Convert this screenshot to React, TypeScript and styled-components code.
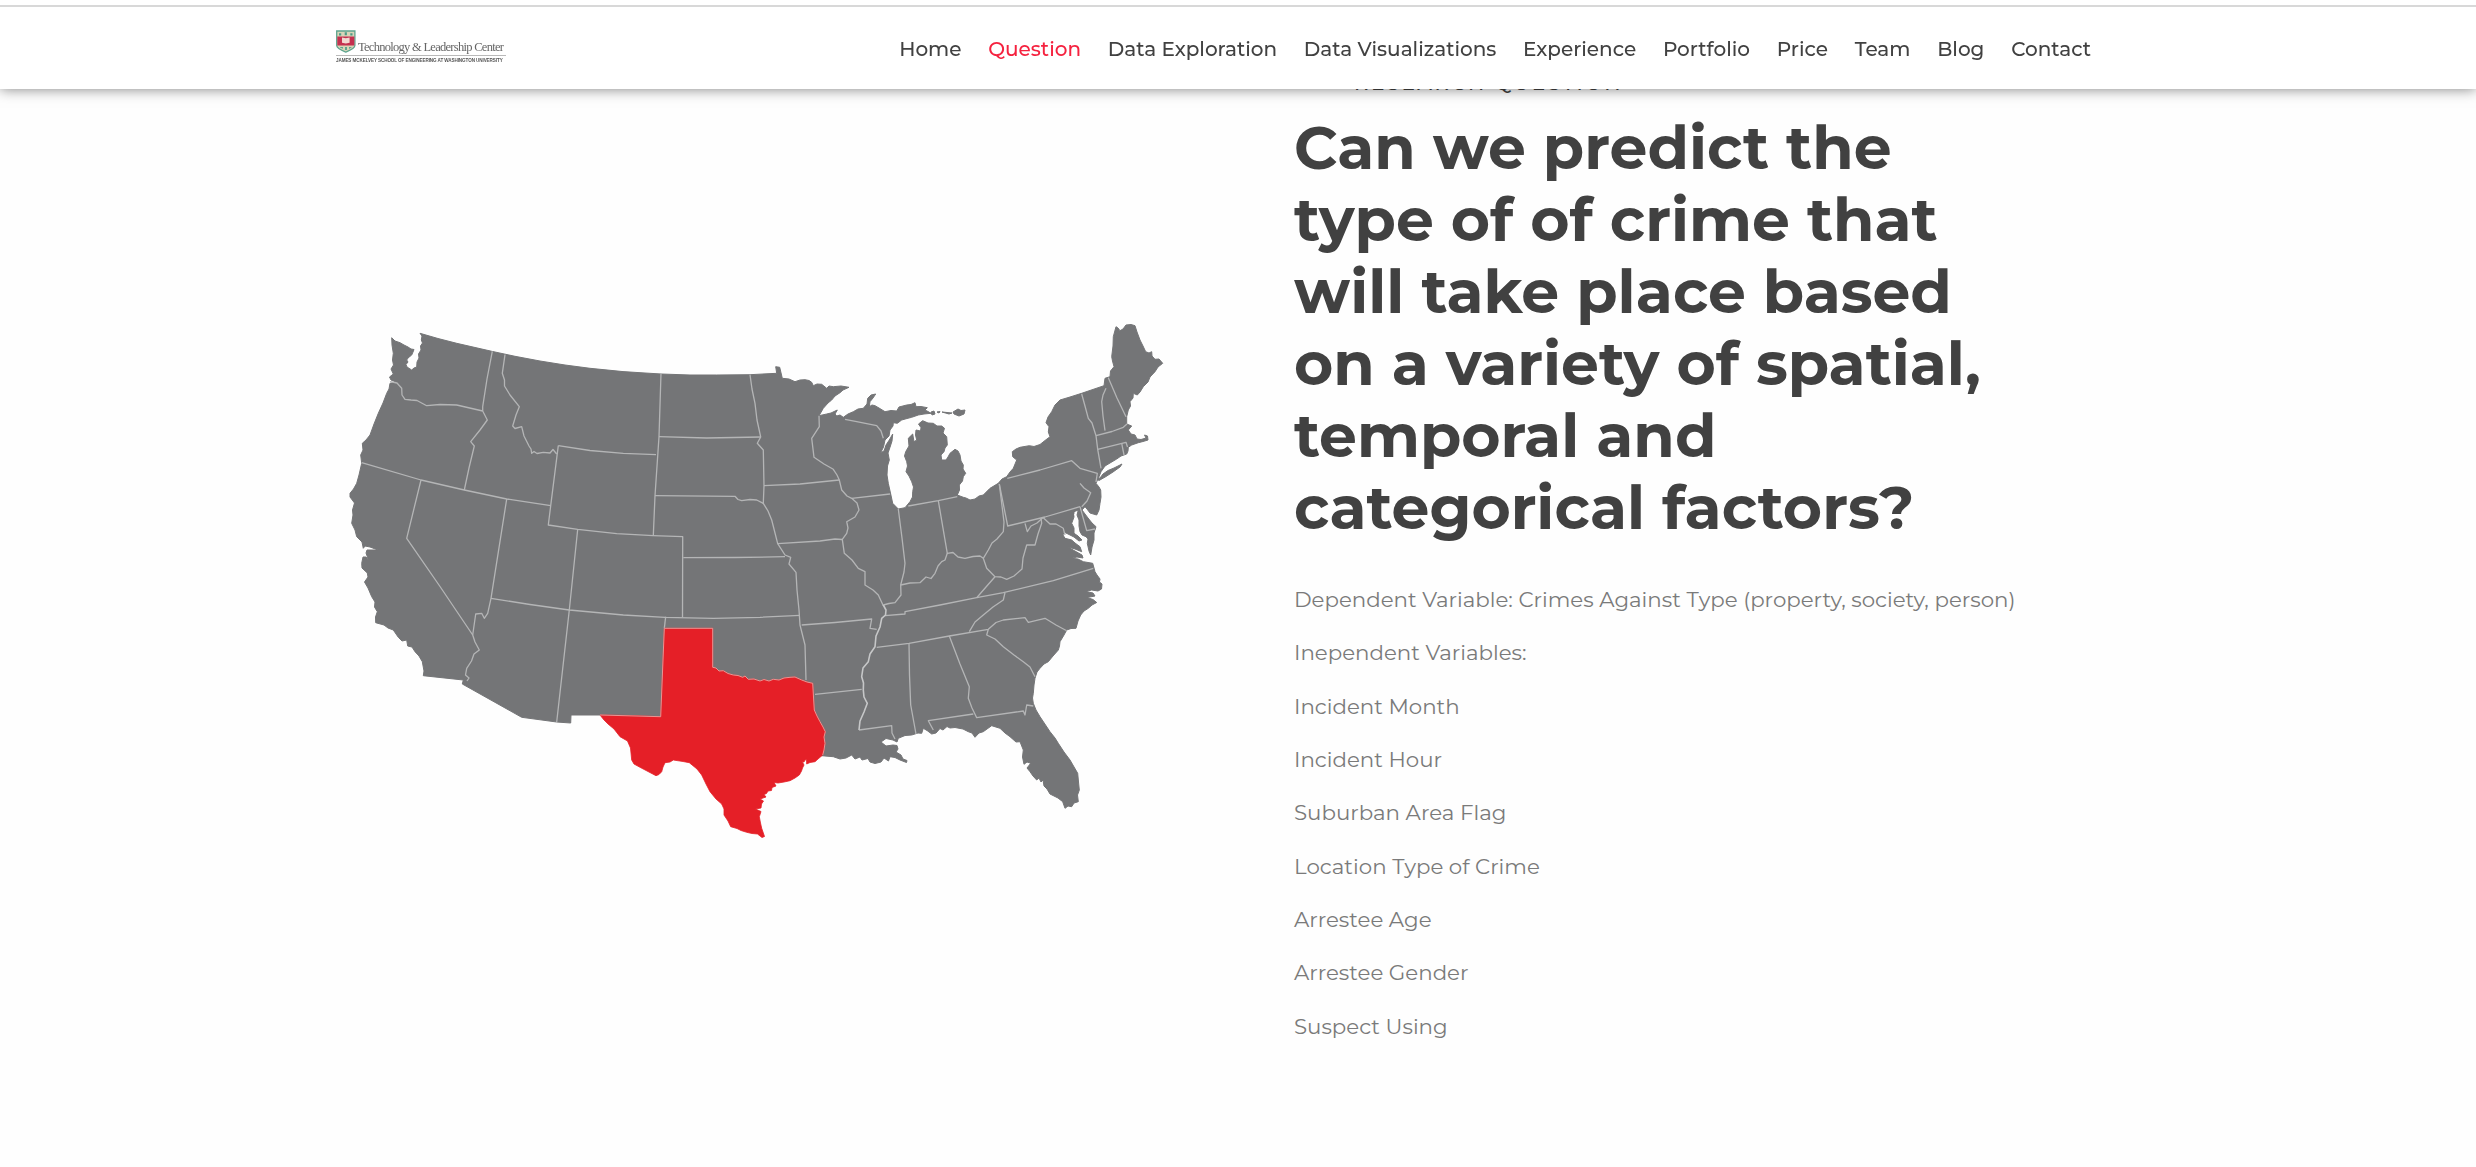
import React from 'react';
import styled, { createGlobalStyle } from 'styled-components';

const GlobalStyle = createGlobalStyle`
  *, *::before, *::after { box-sizing: border-box; }
  body {
    margin: 0;
    background: #fefefe;
    font-family: Montserrat, Inter, sans-serif;
    color: #414141;
    overflow: hidden;
  }
`;

const Page = styled.div`
  height: 1167px;
  overflow: hidden;
`;

const Header = styled.header`
  position: fixed;
  inset: 0 0 auto 0;
  z-index: 10;
  height: 89px;
  display: flex;
  justify-content: space-between;
  align-items: center;
  padding: 8px 385px 0 336px;
  background: #fff;
  box-shadow: 0 0 13px rgba(0, 0, 0, 0.5);

  &::before {
    content: '';
    position: absolute;
    inset: 5px 0 auto 0;
    height: 2px;
    background: #d8d8d8;
  }
`;

const Brand = styled.a`
  display: flex;
  flex-direction: column;
  width: 170px;
  margin-top: -3px;
`;

const BrandTop = styled.div`
  display: flex;
  align-items: flex-start;
  gap: 2px;
  height: 26px;
  border-bottom: 1px solid #b9b9b9;
`;

const BrandName = styled.span`
  padding-top: 10px;
  font: 400 12.5px/15px 'Liberation Serif', serif;
  letter-spacing: -0.72px;
  color: #666;
  white-space: nowrap;
`;

const BrandSub = styled.span`
  padding-top: 1px;
  font: 700 4.6px/7px 'Liberation Sans', sans-serif;
  letter-spacing: -0.1px;
  color: #555;
  white-space: nowrap;
`;

const Nav = styled.nav`
  display: flex;
  gap: 26.75px;
`;

const NavLink = styled.a<{ $active?: boolean }>`
  font-size: 20px;
  font-weight: 500;
  line-height: 30px;
  white-space: nowrap;
  color: ${(p) => (p.$active ? '#f5223f' : '#414141')};
`;

const Section = styled.main`
  display: flex;
  align-items: flex-start;
  padding: 70.8px 0 0 340px;
`;

const Figure = styled.figure`
  margin: 239.2px 114px 0 0;
  width: 840px;
  height: 540px;

  svg { display: block; }
`;

const Copy = styled.div`
  width: 760px;
`;

const Eyebrow = styled.div`
  display: flex;
  align-items: center;
  gap: 15px;
  height: 24px;
  font-size: 20px;
  font-weight: 500;
  line-height: 24px;
  letter-spacing: 2.4px;
  text-transform: uppercase;

  &::before {
    content: '';
    width: 45px;
    height: 2px;
    background: #f5223f;
  }
`;

const Title = styled.h2`
  width: 710px;
  margin: 17.7px 0 28.6px;
  font-size: 60px;
  font-weight: 700;
  line-height: 72px;
`;

const Line = styled.p`
  margin: 0;
  font-size: 21.33px;
  font-weight: 400;
  line-height: 53.33px;
  color: #7a7a7a;
  white-space: nowrap;
`;

const navItems = [
  'Home', 'Question', 'Data Exploration', 'Data Visualizations', 'Experience',
  'Portfolio', 'Price', 'Team', 'Blog', 'Contact',
];

const lines = [
  'Dependent Variable: Crimes Against Type (property, society, person)',
  'Inependent Variables:',
  'Incident Month',
  'Incident Hour',
  'Suburban Area Flag',
  'Location Type of Crime',
  'Arrestee Age',
  'Arrestee Gender',
  'Suspect Using',
];

const titleLines = [
  'Can we predict the', 'type of of crime that', 'will take place based',
  'on a variety of spatial,', 'temporal and', 'categorical factors?',
];

const country = `
391.7,337.7 395,341 400,342.7 404,345 408,347 411,349 414,349.5 413,352 411.7,355 408,358 406.7,360 408,362 406,364.5 407,367 411.7,370
414,368 416.7,367 417,362 419,358 418.5,354 421,350 420.5,346 422.5,343 421.3,340 422,336 420,333.3
438,338.5 456.7,343.3 491.7,351.3 515,356.3 540,361 565,365 590,368.3 623,371.6 645,373 661.3,374 690,375 716.7,375 750,374.7 776.7,373.3
775.7,366.7 779.7,367.3 782.3,378.3 789,379 795,381.7 800,380 805,379.7 809,380.5 811.7,382.3 813.3,385.7 817,384 821.7,384.3 826.7,388.3 829,386 833.3,386.7 841,386 849,387.3
843,390 840,392.7 835,396 831.7,400 828,403 823.3,408.3 819,415.7 826.7,414 831,413 837.3,410 835,414 836.7,416 840,415 843.3,417.3
848,414 853.3,411.7 858,409 863.3,408.3 867,404 867.7,398.3 871,395 875.7,394 873,398 870,401.7 869.3,406.7 872,405 875,405.7 879,408 885,411.7 891,410.5 896.7,411
899,407 906.7,405 911,404.5 915,402.7 916,406.7 921,406.5 927.3,407.7 925,410 928,411.5 931,413.3 924,414 918.3,415 911.7,417.3 907,418.5 901.7,420 897.3,423.3
893.3,422.7 893,426 890,430 889,436 885,440 883.5,447 880.7,452.7 884,451 886,445 889.3,440 892.7,434 892,441 890,447.3 888,453 889.3,460 887.5,466 887,475 888.3,483.3
890.7,494 892.7,503.3 898.3,509 905,507.7 910,501.7 912.5,497 912.7,491.7 913.5,487 911.7,481.7 909,476 906,471.7 907.5,466 906.7,461.7 904.5,456 905.7,451.7 909,446 908.3,438.3
912.7,434 914,441.7 916.7,440 915.5,435 916,430 920.5,431 921,427.7 918.5,424 922.7,420.7 928,423 933.3,423.3 937,426 941.7,426 944.5,428.3 943,433 946.7,436.7 947.3,445 945,448 944,451.7
941,455 941.7,460 946,460 948,457 950,453.3 955,449.3 958,451 960,455 961,461 963.3,465 963,469 965.7,473.3 963.3,476.7 962.5,481 959.3,485 959.5,490 957.3,495
963.3,497.3 966,498 970,500 975,499 979,496 983.3,495 990,488.3 998.3,483.3 1002,479 1006.7,476.7 1010,472 1013.3,468.3 1016.7,460 1012.7,456.7 1012.3,451.7 1016,449 1020,447.3
1029.3,445.7 1034,446.5 1040,444.5 1045,440.5 1050,436.7 1048.3,432 1049,426.7 1046,422.7 1048,417 1051.7,411.7 1055,405 1060,400 1070,397 1081.7,393.3 1104,385.7
1105,378.3 1110,376.7 1110.5,371 1114,366.7 1112.5,361 1111.7,356.7 1113,346 1113.3,336.7 1116,326.7 1118,328 1120,330.7 1123,329 1126,325 1131,324.5 1135,325.7
1137,332 1140,340 1143,346 1145.7,351.7 1149,353 1151.7,351.7 1152,356 1155,359.3 1159,359 1162.7,363.3 1158,367 1155,371.7 1150,377 1148,382 1143.3,386.7 1140,392 1137.3,395
1133.3,393.3 1133,398 1130,401.7 1130.5,406 1128.3,410 1126.7,416.7 1126.7,424 1131.7,426 1128.3,430 1131,434 1135,435 1137,439 1141,439.5 1146,438 1144.5,435 1147.5,436 1148,440 1143,441.5
1138.3,442.7 1131.7,445 1128.3,447.3 1128,451 1126.7,454 1121,456 1116.7,459 1105,466 1101,471.7
1099,476.7 1096,483.3 1099,487 1100.7,490 1101,497 1100,503.3 1099,510 1096.7,515 1090,513 1087,509 1085,506.7 1082,510 1085,514 1088,518 1092,523 1096,526.7
1094,533 1094,540 1092,547 1090.7,555 1089,551 1087.3,543.3 1088,539 1086,536.7 1082,535 1080,531.7 1079,526 1079,520 1077,515 1078.3,510
1074,511.7 1074,517 1071.7,523.3 1074,528 1074,533.3 1078,536 1082,540 1079,541 1074,537 1068,534 1064,532 1063,535 1065,538.3 1071.7,540 1075,543 1080,546.7
1081.7,551.7 1075,549 1068,547 1074,550.5 1082,555 1083,558 1077,557 1071.7,558.3 1078,559 1083.3,561.7 1092.7,563.3
1095,571.7 1097,575 1100,579 1099.5,582 1102,584 1101.5,589 1098,591 1091.7,590 1086,591.5 1093,593 1095,596 1087,597.5 1093,599.5 1096.7,602.5 1092,605 1088.3,608.3
1084,611 1080.7,615 1078,621 1076,628.3 1071,628.5 1066.7,630 1064,635 1060,641.7 1059.5,646 1058.3,650 1053,656 1048.3,661.7 1044,664 1040,668.3 1037,672 1035,678.3 1034,685 1033.3,693.3
1032.5,698 1033.3,703.3 1036,710 1040,716.7 1050,731.7 1055,738 1058.3,743.3 1064,752 1070,760 1077.7,773.3 1078.5,782 1079.3,790 1077.5,795 1078.3,801.7 1074,803 1071.7,806.7 1068,806 1065,808.3
1062.7,801.7 1058,798 1050,794 1047,789 1044,786 1043,780 1041,782 1039,778 1036.7,780 1033,776 1030,771.7 1027,768 1030.7,763.3 1027,762 1024,764.3 1022.5,757 1023.3,750
1020,741.7 1016,742 1010,736.7 1005,733 1000,728.3 991.7,725.7 987,729 983.3,731.7 979,733 975,737.3 972,733 968.3,731.7 963,729 955,727.5 950,728 947,726.5 943,730 940,728.5 936,733 931.7,734
927.3,730.7 923.3,728.3 921.7,733.3 918,733 911.7,735 905,735.5 898.3,738.3 897,742 893,740 886,738.5 881,742 886,746 893,745 897,745.5 898,749 896,752 901,755 903,759 907,760.5 906.5,762.5
900,760 895,757.5 890,756.7 888.5,761 884,758 881,762 875,763.5 870,762 868,758.5 862,760 860,757 855,759 851.7,755
846,758 840,759 833.3,756.7 821.7,755.7 800,740 600,715 571,715 570.7,723 556.7,722 521.7,717.3 462.3,684 463.3,680 423.3,675.7
424,671 422.3,661.7 419,656 415,651.7 412,647 407.7,646 406.7,640 402,641 398.3,637.3 393.3,630 388,628 384,625 375.7,622.7
375.5,617 377.3,611.7 374.5,607 375,602 371.7,596.7 368,588 364.5,582 368,577 367.3,573 362,568 361.7,563.3 363,557 366,557 368.5,560 366,553 367,550 378,550 370,547 365,546 363.3,548.3
362,542 356.7,536.7 355,530 351.7,523.3 353,515 352.5,510 354.5,503 350,497 350,493.3 353.5,489 356.7,483.3 359,475 361.7,463.3 360.7,455 363,450 362.3,443.3 366,440 370,435
374,424 378.3,413.3 383,403 386.7,393.3 389,389 390,383.3 396,382 391,380 389.5,377 393.3,374 391,369 393.5,365 392.5,360 393.3,353.3 392,345`;

const texas = `
664.3,628.3 712.7,628.3 712.7,667.3 716,668 719,671 723.3,670.7 728,673.5 733.3,675 738,675.5 742.7,677.3 745,676 748.3,679.3 754,679 760,681 764,679.5 769,681 773.3,679.3 779,680 784,678
790,677.3 795,677 801.7,680 807,682 812.7,683.3 813.5,697 814.3,710 817,716 820,721.7 823,727 825.3,731.7 824,737 825,743.3 824,750 822.7,755
818,759 815,761.7 810,762.5 806.7,764 806.5,759.5 805,760 804,762 802.3,761.7 804,765 802.5,768 801.5,771 799.3,775 795,778 790,780.7 784,782 778,783 774,782.5 776,786 772,787.5 771.5,790.5 768,791 766.5,793.5 764,794.5 766,797 760,799 763.5,801
761.5,804 761,808 755.5,809 761,811.5 759.3,816.7 760.5,823 761.7,828.3 764.5,836.5 762,837.5 757.5,834 752,833.5 746.7,832.3 741,830.5 737,828.5
730.7,826.7 728,821 724,815 724,809 721.7,804 716,799 710,791.7 706,784 701.7,775 697,769 689.3,762.7 683,761.5 673.3,760 670,762 665,762.7 663,767 661.7,771.7 659,774.5 656,775.7
648,771.5 640,767.3 634,764 631.7,760 631,753 630.5,748 627.5,741 620,736.7 614,729 608,724 604,720 600,715 630,715.5 660.7,716.7 662.5,672`;

const longIsland = '1097,479 1100,478 1103,474 1108,470.5 1114,468 1122,464 1120,467 1113,472 1106,476.5 1099,480.5';
const upperIslands = [
  '931,412 934,411 935,414 932,415', '937,412 940,411.5 939,413', '942,412 952,413 949,414', '953,412 958,409 961,410.5 965,410 964,414 959,416 954,414',
];
const smallIslands = ['415,344 419,346 418,349 415.5,347', '1074,513.5 1075,514 1074.5,517'];

const borders = [
  '390,381.7 397,383 401.7,388.3 402,395 405,399.3 411,400 417,400.5 426.7,405.7 440,404.5 456.7,405 482.7,411',
  '492.3,351.3 487,379 482.7,406.7 482.7,411 487.3,420 480,430 470.7,441.7 474.3,446 469,468 464.3,490',
  '361.7,462.7 421,480 464.3,490 506.7,499 550.7,505.7',
  '421,480 406.7,538.3 440,586.5 472.7,635 475,642 479.3,650 474,654 471.5,661 466.7,668.3 465.5,675 469,678 467,681',
  '472.7,635 475.7,614 481.7,613.3 484.3,618.3 487.7,613.3 491,598.3 506.7,499',
  '491,598.3 530,604.5 569.3,610 623.3,615 665,617.3 713.3,618.3 760,617.3 800,615.3',
  '556.7,722 569.3,610 577.7,529.3',
  '558.3,445.7 550.7,505.7 548.3,525 577.7,529.3 616.7,533.7 653,535.7 682.7,536.7 682.5,617.5',
  '558.3,445.7 590,450.5 623.3,453.3 656,454.7',
  '505,354.7 502.3,373.3 504.5,380 504.5,386 510,395 519.3,406.7 516,415 512.7,426 515,428.5 521.7,426.7 524,436 529,446 531,449 531.7,453.3 534,451.5 537,453.5 543.3,452.3 550,453 553,449.5 556.7,454',
  '661,373.3 659,436.7 655,495.7 653.3,535.7',
  '659,436.7 706.7,438 760.7,437',
  '655,495.7 735,496.3 738,499.5 741.7,500.7 750,499.5 756.7,500 763.3,503.3',
  '750,374.7 752,389 755,403.3 757,420 760.7,437 757.3,443.3 763.3,450 764,485.7 763.3,503.3 768,511 771.7,520 775,533 777.7,543.7 785,555 790.7,557.3 789,564 796,572.3 797,590 799,610 800,625 805,645 806,680',
  '764,485.7 800,484 839.3,480',
  '777.7,543.7 820,541 835,539 842,539.5',
  '683.3,557.7 735,557.5 785,556.7',
  '819,415.7 819.3,426.7 811.7,438.3 814,457.3 824,464 833.3,469.3 837,475 839.3,480 841.7,490 847,496 851.7,498.3 857,503 859,510 855,517 846.7,521.7 848,528 846.7,533.3 842.3,539.3 844.3,553.3 852,560 858.3,568.3 865,571.7 865,585 873,590 878.3,595 883.3,605.7',
  '845,419.3 856.7,421.7 876.7,425.7 881,431 883.3,438.3',
  '851.7,498.3 890,494',
  '898.3,509 902,538 905,563.3 904,572 900.7,585 901,595 895,602.7 889,603.5 883.3,605',
  '908.3,506 938.3,500.7 957.3,496.7',
  '938.3,500.7 947.3,553.3',
  '900.7,585 910,583 920,582.7 926,577 931,578.5 935,573.3 938,566 941.7,561.7 945,560 947.3,553.3 953,552.5 958,557 965,558.3 973,556.5 980,556 983.3,558.3 988.3,550 992,543 997,539 1003.3,531.7 1004,522 999.3,484',
  '999.3,484 1007.7,526 1045,517 1080,506.7',
  '1007.3,478.3 1040,470 1071.7,460.7 1080,468.3 1097.3,473.3 1096,482',
  '1080,483.3 1084,488 1090.7,492.7 1087,501 1081.7,506.7',
  '983.3,558.3 986.7,568.3 995,576.7 1001,577 1006.7,579.3 1014,576 1022,569 1023,558 1026.7,545 1035,545 1038,534 1041.7,523.3 1041,518',
  '1025,523.3 1027.3,531.7 1031,526 1037,523 1043,517.5 1050,524 1056,524 1063.3,528.3 1065,535',
  '995,576.7 986,587 976.7,597.7',
  '885,615.7 905,614 905,611.7 940,605 976.7,597.7 1003.3,592.7 1053.3,580.7 1093.3,568.3',
  '1005,592.7 1003.3,600 993,607 983.3,615 975,622 969.3,631.7',
  '876.7,647.3 909,643.3 949.3,636 988.3,629.3 996,622.5 1003.3,620 1025,617.7 1028.3,622.3 1045,618.3 1056,625 1066.7,630.7',
  '988.3,629.3 986.7,635 995,639 1003.3,646.7 1014,655 1023.3,661.7 1030,667 1035,676.7',
  '909,643.3 909.5,675 910.7,705 916,734',
  '949.3,636 960,664 969.3,686.7 968.3,698.3 972,708 976.7,717.7 1023.3,711 1025,715 1026.7,705 1033.3,706',
  '933.3,730 928.3,720.7 973.3,714',
  '801.7,625 835,622.5 871.7,619 870,628.3 876.7,629.3',
  '815,694.3 861.7,689.3',
  '859,730 891.7,725.7 892,733 895,739',
  '665.7,616.7 664.3,628.3',
  '1081.7,394 1085,406 1088.3,418.3 1092,423 1096,435.7 1097.7,449.3 1101,468.3',
  '1106,388.3 1103,395 1101.7,401.7 1103,416 1105,430.7',
  '1108.3,377.7 1117,398 1126,416.7',
  '1096,435.7 1112,431.5 1123.3,427.3 1127,424',
  '1097.7,449.3 1126,442.3 1127.5,447', '1121.7,443.3 1124,455',
  '1080,506.7 1086.7,530.7 1095,529',
];
const river = '883.3,605 886,610 885.5,615 881.7,618.3 880,627 876,636 875,646.7 870,654 868.3,661.7 863,668 861.7,676.7 863.5,683 863.3,690 864,697 867.3,703.3 864,712 860,721 859,730';

const StatesMap = () => (
  <svg width="840" height="540" viewBox="340 310 840 540" role="img" aria-label="United States">
    <g fill="#747577" stroke="#747577" strokeWidth="1" strokeLinejoin="round">
      <polygon points={country} />
      <polygon points={longIsland} />
      {upperIslands.map((p) => <polygon key={p} points={p} />)}
    </g>
    {smallIslands.map((p) => <polygon key={p} points={p} fill="#fff" />)}
    <g fill="none" stroke="#b4b5b6" strokeWidth="1.3" strokeLinejoin="round">
      {borders.map((p) => <polyline key={p} points={p} />)}
      <polyline points={river} strokeWidth="1.6" stroke="#c6c7c8" />
    </g>
    <polygon points={texas} fill="#e51f27" stroke="#e51f27" strokeWidth="0.8" />
    <polyline
      points={texas.trim().split(/\s+/).slice(0, 34).join(' ')}
      fill="none" stroke="#e8a39f" strokeWidth="0.9"
    />
    <polyline points="664.3,628.3 662.5,672 660.7,716.7 600,715" fill="none" stroke="#e8a39f" strokeWidth="0.9" />
  </svg>
);

const Crest = () => (
  <svg width="20" height="23" viewBox="0 0 20 23" aria-hidden="true">
    <path d="M.7 1h18.2v14.5c0 3-4.5 4.8-9.1 6.6C5.200 20.300.7 18.500.7 15.500z" fill="#d8d5b8" stroke="#5da58f" strokeWidth="1.3" />
    <path d="M1.300 6.500h17v9H1.300z" fill="#c5314f" />
    <path d="M6 7.500l3.800.8 3.800-.8v5.200l-3.800.8-3.800-.8z" fill="#f2d9d2" />
    <path d="M3 3.300h2.200v2.200H3zM8.700 2.300h2.200v3H8.700zM14.300 3.300h2.200v2.200h-2.200z" fill="#4f9c86" />
    <path d="M4 17h3v1.800L4 17.500zM9 17h2v3H9zM13 17h3l-3 2z" fill="#5da58f" />
  </svg>
);

export default function App() {
  return (
    <Page>
      <GlobalStyle />
      <Header>
        <Brand>
          <BrandTop>
            <Crest />
            <BrandName>Technology &amp; Leadership Center</BrandName>
          </BrandTop>
          <BrandSub>JAMES MCKELVEY SCHOOL OF ENGINEERING AT WASHINGTON UNIVERSITY</BrandSub>
        </Brand>
        <Nav>
          {navItems.map((item) => (
            <NavLink key={item} $active={item === 'Question'}>{item}</NavLink>
          ))}
        </Nav>
      </Header>
      <Section>
        <Figure><StatesMap /></Figure>
        <Copy>
          <Eyebrow>Research Question</Eyebrow>
          <Title>
            {titleLines.map((line, i) => (
              <React.Fragment key={line}>{i > 0 && <br />}{line}</React.Fragment>
            ))}
          </Title>
          {lines.map((line) => <Line key={line}>{line}</Line>)}
        </Copy>
      </Section>
    </Page>
  );
}
